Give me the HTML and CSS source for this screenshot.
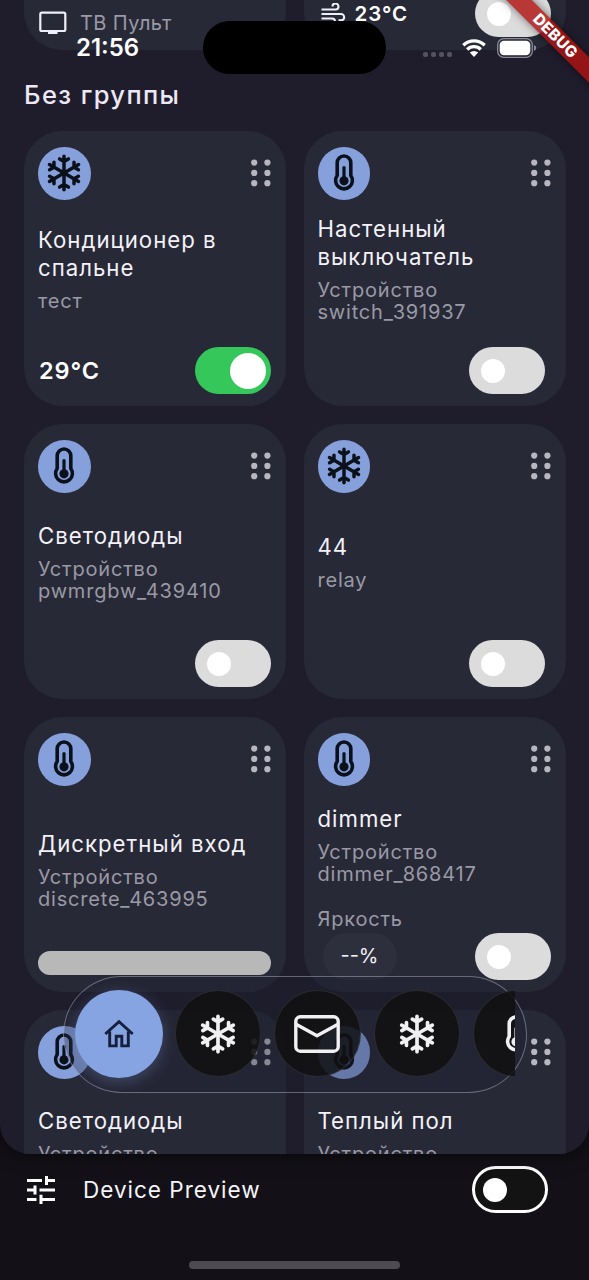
FILE: index.html
```html
<!DOCTYPE html>
<html lang="ru">
<head>
<meta charset="utf-8">
<title>Устройства</title>
<link rel="stylesheet" href="styles.css">
</head>
<body>
<svg class="defs" width="0" height="0">
  <symbol id="snow" viewBox="0 0 36 38">
    <g fill="none" stroke="currentColor" stroke-width="3.5" stroke-linecap="round" stroke-linejoin="round">
      <g id="arm"><path d="M18 19V2.200M13.600 4.900L18 7.400L22.400 4.900"/></g>
      <use href="#arm" transform="rotate(60 18 19)"/>
      <use href="#arm" transform="rotate(120 18 19)"/>
      <use href="#arm" transform="rotate(180 18 19)"/>
      <use href="#arm" transform="rotate(240 18 19)"/>
      <use href="#arm" transform="rotate(300 18 19)"/>
    </g>
  </symbol>
  <symbol id="thermo" viewBox="0 0 22 38">
    <path d="M4.2 21.5V8.8a6.8 6.8 0 0 1 13.6 0v12.7a8.4 8.4 0 1 1-13.6 0z" fill="none" stroke="currentColor" stroke-width="3.6" stroke-linejoin="round"/>
    <circle cx="11" cy="26.8" r="4.6" fill="currentColor"/>
    <path d="M11 26V13.5" stroke="currentColor" stroke-width="3.2" stroke-linecap="round"/>
  </symbol>
  <symbol id="dots" viewBox="0 0 20 28">
    <g fill="currentColor"><circle cx="3.2" cy="3.6" r="3.1"/><circle cx="16.4" cy="3.6" r="3.1"/><circle cx="3.2" cy="13.9" r="3.1"/><circle cx="16.4" cy="13.9" r="3.1"/><circle cx="3.2" cy="24.2" r="3.1"/><circle cx="16.4" cy="24.2" r="3.1"/></g>
  </symbol>
</svg>

<main class="screen">
  <section class="grid grid-top">
    <article class="card card-tail tail-left">
      <svg class="tv" viewBox="0 0 28 24"><rect x="1.3" y="1.6" width="25" height="18.4" rx="1.6" fill="none" stroke="currentColor" stroke-width="2.2"/><path d="M9 20h9.500v3H9z" fill="currentColor"/></svg>
      <span class="tv-label">ТВ Пульт</span>
    </article>
    <article class="card card-tail tail-right">
      <svg class="wind" viewBox="0 0 26 24"><path d="M1.500 6.500H15.500a3 3 0 1 0-3-3M1.500 11H21a3.200 3.200 0 1 1 0 6.400H18.500M1.500 15.500H12a3 3 0 1 1-3 3" fill="none" stroke="currentColor" stroke-width="2.1"/></svg>
      <b class="temp temp-small">23°C</b>
      <span class="switch"><i></i></span>
    </article>
  </section>

  <h1 class="group-title">Без группы</h1>

  <section class="grid">
    <article class="card">
      <header><span class="badge"><svg class="snow"><use href="#snow"/></svg></span><svg class="dots"><use href="#dots"/></svg></header>
      <div class="info"><h2>Кондиционер в спальне</h2><p>тест</p></div>
      <footer><b class="temp">29°C</b><span class="switch on"><i></i></span></footer>
    </article>
    <article class="card">
      <header><span class="badge"><svg class="thermo"><use href="#thermo"/></svg></span><svg class="dots"><use href="#dots"/></svg></header>
      <div class="info"><h2>Настенный выключатель</h2><p>Устройство switch_391937</p></div>
      <footer class="inset"><span class="switch"><i></i></span></footer>
    </article>
    <article class="card">
      <header><span class="badge"><svg class="thermo"><use href="#thermo"/></svg></span><svg class="dots"><use href="#dots"/></svg></header>
      <div class="info"><h2>Светодиоды</h2><p>Устройство pwmrgbw_439410</p></div>
      <footer><span class="switch"><i></i></span></footer>
    </article>
    <article class="card">
      <header><span class="badge"><svg class="snow"><use href="#snow"/></svg></span><svg class="dots"><use href="#dots"/></svg></header>
      <div class="info"><h2>44</h2><p>relay</p></div>
      <footer class="inset"><span class="switch"><i></i></span></footer>
    </article>
    <article class="card card-bar">
      <header><span class="badge"><svg class="thermo"><use href="#thermo"/></svg></span><svg class="dots"><use href="#dots"/></svg></header>
      <div class="info"><h2>Дискретный вход</h2><p>Устройство discrete_463995</p></div>
      <footer><span class="bar"></span></footer>
    </article>
    <article class="card card-dimmer">
      <header><span class="badge"><svg class="thermo"><use href="#thermo"/></svg></span><svg class="dots"><use href="#dots"/></svg></header>
      <div class="info"><h2>dimmer</h2><p>Устройство dimmer_868417</p><p class="level-label">Яркость</p></div>
      <footer><span class="level">--%</span><span class="switch"><i></i></span></footer>
    </article>
    <article class="card card-cut">
      <header><span class="badge"><svg class="thermo"><use href="#thermo"/></svg></span><svg class="dots"><use href="#dots"/></svg></header>
      <div class="info"><h2>Светодиоды</h2><p>Устройство</p></div>
    </article>
    <article class="card card-cut">
      <header><span class="badge"><svg class="thermo"><use href="#thermo"/></svg></span><svg class="dots"><use href="#dots"/></svg></header>
      <div class="info"><h2>Теплый пол</h2><p>Устройство</p></div>
    </article>
  </section>

  <nav class="dock">
    <div class="dock-track">
      <span class="tab active"><svg width="32" height="30" viewBox="0 0 32 30"><path d="M6.700 12.500V26.900H13.200V17.300H18.800V26.900H25.300V12.500M2.300 15L16 2.600L29.700 15" fill="none" stroke="currentColor" stroke-width="2.900"/></svg></span>
      <span class="tab"><svg class="snow snow-tab"><use href="#snow"/></svg></span>
      <span class="tab"><svg width="46" height="38" viewBox="0 0 46 38"><rect x="1.800" y="1.800" width="42.400" height="34.400" rx="4.500" fill="none" stroke="currentColor" stroke-width="3.400"/><path d="M2.500 9.500L23 20.800L43.500 9.500" fill="none" stroke="currentColor" stroke-width="3.400" stroke-linejoin="round"/></svg></span>
      <span class="tab"><svg class="snow snow-tab"><use href="#snow"/></svg></span>
      <span class="tab"><svg class="thermo"><use href="#thermo"/></svg></span>
    </div>
  </nav>

  <div class="status">
    <span class="clock">21:56</span>
    <span class="island"></span>
    <span class="signal"><i></i><i></i><i></i><i></i></span>
    <svg class="wifi" viewBox="0 0 24 18"><path d="M1.300 6.300a15.300 15.300 0 0 1 21.400 0M5.200 10.500a9.700 9.700 0 0 1 13.600 0" fill="none" stroke="#fff" stroke-width="3.300"/><path d="M12 18L7.800 13.600a6 6 0 0 1 8.400 0z" fill="#fff"/></svg>
    <svg class="battery" viewBox="0 0 40 20"><rect x=".7" y=".7" width="34.600" height="18.600" rx="6" fill="none" stroke="#8c8a98" stroke-width="1.300"/><rect x="2.700" y="2.700" width="30.600" height="14.600" rx="4.200" fill="#fff"/><path d="M37 7v6q2.300-1 2.300-3T37 7z" fill="#8c8a98"/></svg>
  </div>
  <div class="ribbon">DEBUG</div>
</main>

<footer class="preview">
  <div class="preview-row">
    <svg class="tune" viewBox="0 0 28 28"><path d="M0 4.500H15M19.500 4.500H28M19.500 0V9M0 14H8.500M8 9.500V18.500M12.500 14H28M0 23.500H9.500M14 18.800V28M14 23.500H28" fill="none" stroke="#fff" stroke-width="3"/></svg>
    <span class="preview-label">Device Preview</span>
    <span class="switch outline"><i></i></span>
  </div>
  <span class="home-bar"></span>
</footer>
</body>
</html>
```
FILE: styles.css
```css
* { box-sizing: border-box; }
body {
  margin: 0;
  width: 589px;
  height: 1280px;
  overflow: hidden;
  background: #131117;
  color: #f0eef8;
  font-family: Inter, "Noto Sans", sans-serif;
}
.defs { position: absolute; }
svg { display: block; flex: none; }

.screen {
  position: relative;
  height: 1154px;
  overflow: hidden;
  background: #1f1d2b;
  border-radius: 0 0 30px 30px;
  box-shadow: 0 2px 18px rgba(0, 0, 0, .6);
}
.grid {
  display: grid;
  grid-template-columns: 262px 262px;
  grid-auto-rows: 274.5px;
  gap: 18.5px 17.5px;
  padding-left: 24px;
}
.grid-top { grid-auto-rows: 50px; }
.card {
  display: flex;
  flex-direction: column;
  padding: 16px 15px 11.5px 14px;
  background: #272937;
  border-radius: 38px;
}
.card-tail {
  flex-direction: row;
  align-items: flex-start;
  border-radius: 0 0 38px 38px;
}
.card.tail-left { padding: 11px 15px 0; }
.card.tail-right { padding: 0 14.5px 0 16px; }
.tv { width: 28px; height: 24px; }
.tv-label {
  margin: 0 0 0 13px;
  font-size: 20px;
  line-height: 24px;
  letter-spacing: .4px;
  color: #9a99a5;
}
.wind { width: 26px; height: 24px; margin: 3px 9px 0 0; }
.tail-right .switch { margin-top: -10px; }
.temp {
  font-size: 23.5px;
  font-weight: 600;
  line-height: 28px;
  letter-spacing: .9px;
  padding-left: 1px;
  color: #fff;
}
.temp-small { font-size: 20.5px; padding: 0; }

.group-title {
  margin: 0;
  height: 81px;
  padding: 29px 0 0 24px;
  font-size: 25.5px;
  line-height: 31px;
  font-weight: 500;
  letter-spacing: 1.4px;
  color: #ece8f5;
}

.card header {
  display: flex;
  justify-content: space-between;
  align-items: center;
  height: 52.5px;
}
.badge {
  display: flex;
  align-items: center;
  justify-content: center;
  width: 52.5px;
  height: 52.5px;
  border-radius: 50%;
  background: #86a0dc;
  color: #0b111b;
}
.snow { width: 36px; height: 38px; }
.thermo { width: 22px; height: 38px; }
.dots { width: 20px; height: 28px; margin-top: -1px; color: #b7b6c1; }

.info {
  flex: 1;
  display: flex;
  flex-direction: column;
  justify-content: center;
  padding-bottom: 8px;
}
.info h2 {
  margin: 0 0 8px;
  font-size: 22.2px;
  line-height: 28px;
  font-weight: 400;
  letter-spacing: 1px;
  color: #f3f2fa;
}
.info p {
  margin: 0;
  width: 210px;
  font-size: 20px;
  line-height: 22px;
  letter-spacing: .8px;
  color: #9a99a5;
}
.info p:not(.level-label) { width: min-content; }
.card footer {
  display: flex;
  align-items: center;
  justify-content: space-between;
  height: 47px;
}
.card .switch { margin-left: auto; }
.card footer.inset { padding-right: 6px; }

.switch {
  display: flex;
  align-items: center;
  flex: none;
  width: 76px;
  height: 47px;
  padding-left: 12px;
  border-radius: 24px;
  background: #dcdcdc;
}
.switch i { width: 24px; height: 24px; border-radius: 50%; background: #fff; }
.switch.on { background: #35c75a; padding-left: 35px; }
.switch.on i { width: 36px; height: 36px; }
.switch.outline { margin-left: auto; border: 3px solid #fff; background: #131313; padding-left: 8px; }

.card-bar { padding-bottom: 17px; }
.card-bar footer { height: 24px; }
.card-bar .info { padding-bottom: 0; padding-top: 3px; }
.bar { width: 233px; height: 24px; border-radius: 12px; background: #b8b8b8; }
.card-dimmer .info { padding-bottom: 0; justify-content: flex-end; }
.card-dimmer .info p.level-label { margin: 23px 0 3px; }
.level {
  width: 74px;
  height: 47px;
  margin-left: 5px;
  border-radius: 24px;
  background: #2e2f3c;
  text-align: center;
  font-size: 20px;
  line-height: 47px;
}
.card-cut .info { justify-content: flex-start; padding-top: 28px; }

.dock {
  position: absolute;
  left: 63px;
  top: 976px;
  width: 464px;
  height: 117px;
  border: 1.5px solid rgba(220, 220, 240, .38);
  border-radius: 59px;
  background: rgba(31, 31, 46, .3);
}
.dock-track {
  display: flex;
  gap: 13px;
  width: 451px;
  height: 114px;
  padding: 13px 0 0 11px;
  overflow: hidden;
}
.tab {
  display: flex;
  flex: none;
  align-items: center;
  justify-content: center;
  width: 86.5px;
  height: 87px;
  border: 1px solid rgba(255, 255, 255, .1);
  border-radius: 50%;
  background: rgba(16, 16, 18, .86);
  color: #f0f0f2;
}
.tab.active {
  width: 88px;
  height: 88px;
  margin-right: -1.5px;
  border: 0;
  background: #86a3e2;
  color: #14203c;
  box-shadow: 0 4px 16px rgba(134, 163, 226, .3);
}
.snow-tab { width: 38px; height: 40px; }

.status {
  position: absolute;
  top: 21px;
  left: 0;
  width: 589px;
  height: 53px;
  padding-left: 76px;
  display: flex;
  align-items: center;
}
.clock { width: 127px; font-size: 24px; font-weight: 600; color: #fff; }
.island { width: 183px; height: 53px; border-radius: 27px; background: #000; }
.signal { display: flex; gap: 3px; margin: 13px 10px 0 37px; }
.signal i { width: 5px; height: 5px; border-radius: 2px; background: #555362; }
.wifi { width: 24px; height: 18px; }
.battery { width: 40px; height: 20px; margin-left: 11px; }
.ribbon {
  position: absolute;
  left: 464px;
  top: 25.500px;
  width: 180px;
  height: 18px;
  transform: rotate(45deg);
  background: rgba(176, 18, 18, .82);
  box-shadow: 0 0 8px rgba(0, 0, 0, .5);
  text-align: center;
  text-indent: 3px;
  font-size: 15.500px;
  line-height: 18px;
  font-weight: 800;
  letter-spacing: .3px;
  color: #fff;
}

.preview { display: flex; flex-direction: column; align-items: center; height: 126px; }
.preview-row {
  display: flex;
  align-items: center;
  width: 589px;
  height: 47px;
  margin-top: 12px;
  padding: 0 41px 0 27px;
}
.tune { width: 28px; height: 28px; }
.preview-label { margin-left: 28px; font-size: 22.500px; letter-spacing: 1px; color: #f5f4fa; }
.home-bar { width: 211px; height: 8px; margin-top: 48px; border-radius: 4px; background: #4d4a51; }
```
